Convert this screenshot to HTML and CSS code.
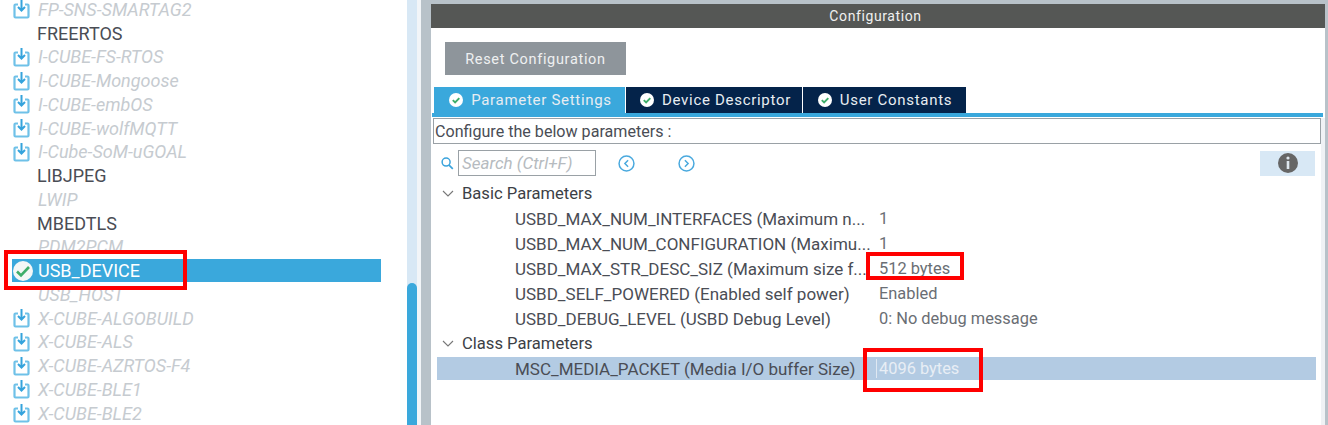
FILE: index.html
```html
<!DOCTYPE html>
<html lang="en">
<head>
    <meta charset="UTF-8">
    <title>Configuration</title>
    <link rel="stylesheet" href="styles.css">
</head>
<body>
<svg class="defs" width="0" height="0">
    <symbol id="pack" viewBox="0 0 17 20">
        <path d="M5 5.500H2.500a1 1 0 0 0-1 1v11a1 1 0 0 0 1 1h12a1 1 0 0 0 1-1v-11a1 1 0 0 0-1-1H12" fill="none" stroke="#6fc1e8" stroke-width="2.200"/>
        <path d="M8.500 1v10M5 8l3.500 3.500L12 8" fill="none" stroke="#35a3dc" stroke-width="2"/>
    </symbol>
    <symbol id="check" viewBox="0 0 14 14">
        <circle cx="7" cy="7" r="7" fill="#fff"/>
        <path d="M3.800 7.200l2.300 2.300 4.200-4.400" fill="none" stroke="#3fae6a" stroke-width="1.900"/>
    </symbol>
    <symbol id="check-big" viewBox="0 0 20 20">
        <circle cx="10" cy="10" r="10" fill="#f4f7f6"/>
        <path d="M4 10.500l4 4 8-8.500" fill="none" stroke="#3fae6a" stroke-width="2.600"/>
    </symbol>
</svg>
<main class="main">
    <aside class="packs">
        <ul class="pack-list">
            <li class="off"><svg class="pack-icon"><use href="#pack"/></svg>FP-SNS-SMARTAG2</li>
            <li class="on">FREERTOS</li>
            <li class="off"><svg class="pack-icon"><use href="#pack"/></svg>I-CUBE-FS-RTOS</li>
            <li class="off"><svg class="pack-icon"><use href="#pack"/></svg>I-CUBE-Mongoose</li>
            <li class="off"><svg class="pack-icon"><use href="#pack"/></svg>I-CUBE-embOS</li>
            <li class="off"><svg class="pack-icon"><use href="#pack"/></svg>I-CUBE-wolfMQTT</li>
            <li class="off"><svg class="pack-icon"><use href="#pack"/></svg>I-Cube-SoM-uGOAL</li>
            <li class="on">LIBJPEG</li>
            <li class="off">LWIP</li>
            <li class="on">MBEDTLS</li>
            <li class="off">PDM2PCM</li>
            <li class="selected"><svg class="check-icon"><use href="#check-big"/></svg>USB_DEVICE</li>
            <li class="off">USB_HOST</li>
            <li class="off"><svg class="pack-icon"><use href="#pack"/></svg>X-CUBE-ALGOBUILD</li>
            <li class="off"><svg class="pack-icon"><use href="#pack"/></svg>X-CUBE-ALS</li>
            <li class="off"><svg class="pack-icon"><use href="#pack"/></svg>X-CUBE-AZRTOS-F4</li>
            <li class="off"><svg class="pack-icon"><use href="#pack"/></svg>X-CUBE-BLE1</li>
            <li class="off"><svg class="pack-icon"><use href="#pack"/></svg>X-CUBE-BLE2</li>
        </ul>
    </aside>
    <div class="scrollbar"><div class="thumb"></div></div>
    <div class="gutter"></div>
    <section class="config">
        <h2 class="config-title">Configuration</h2>
        <button class="reset">Reset Configuration</button>
        <div class="tabs">
            <div class="tab active"><svg class="tab-check"><use href="#check"/></svg>Parameter Settings</div>
            <div class="tab"><svg class="tab-check"><use href="#check"/></svg>Device Descriptor</div>
            <div class="tab"><svg class="tab-check"><use href="#check"/></svg>User Constants</div>
        </div>
        <div class="hint">Configure the below parameters :</div>
        <div class="tools">
            <svg class="search-icon" viewBox="0 0 14 14"><circle cx="5.500" cy="5.500" r="4.300" fill="none" stroke="#3aa3dc" stroke-width="1.600"/><path d="M8.700 8.700l4 4" stroke="#3aa3dc" stroke-width="1.800"/></svg>
            <div class="search">Search (Ctrl+F)</div>
            <svg class="nav-icon prev" viewBox="0 0 16 16"><circle cx="8" cy="8" r="7" fill="none" stroke="#4aa9de" stroke-width="1.400"/><path d="M9.500 5L6.500 8l3 3" fill="none" stroke="#4aa9de" stroke-width="1.400"/></svg>
            <svg class="nav-icon next" viewBox="0 0 16 16"><circle cx="8" cy="8" r="7" fill="none" stroke="#4aa9de" stroke-width="1.400"/><path d="M6.500 5l3 3-3 3" fill="none" stroke="#4aa9de" stroke-width="1.400"/></svg>
            <div class="info">
                <svg class="info-icon" viewBox="0 0 20 20"><circle cx="10" cy="10" r="10" fill="#666"/><rect x="8.700" y="8" width="2.600" height="8" fill="#dfe7ee"/><circle cx="10" cy="5" r="1.600" fill="#dfe7ee"/></svg>
            </div>
        </div>
        <div class="params">
            <div class="group"><svg class="chevron" viewBox="0 0 12 8"><path d="M1 1l5 5 5-5" fill="none" stroke="#777" stroke-width="1.100"/></svg>Basic Parameters</div>
            <div class="row"><span class="name">USBD_MAX_NUM_INTERFACES (Maximum n...</span><span class="value">1</span></div>
            <div class="row"><span class="name">USBD_MAX_NUM_CONFIGURATION (Maximu...</span><span class="value">1</span></div>
            <div class="row"><span class="name">USBD_MAX_STR_DESC_SIZ (Maximum size f...</span><span class="value">512 bytes</span></div>
            <div class="row"><span class="name">USBD_SELF_POWERED (Enabled self power)</span><span class="value">Enabled</span></div>
            <div class="row"><span class="name">USBD_DEBUG_LEVEL (USBD Debug Level)</span><span class="value">0: No debug message</span></div>
            <div class="group"><svg class="chevron" viewBox="0 0 12 8"><path d="M1 1l5 5 5-5" fill="none" stroke="#777" stroke-width="1.100"/></svg>Class Parameters</div>
            <div class="row picked"><span class="name">MSC_MEDIA_PACKET (Media I/O buffer Size)</span><span class="value">4096 bytes</span></div>
        </div>
    </section>
    <div class="edge"></div>
</main>
<div class="mark mark-device"></div>
<div class="mark mark-str"></div>
<div class="mark mark-media"></div>
</body>
</html>
```

FILE: styles.css
```css
html, body {
    height: 100%;
    margin: 0;
}

body {
    position: relative;
    overflow: hidden;
    font-family: Roboto, 'Liberation Sans', sans-serif;
    background-color: #fff;
}

.defs {
    position: absolute;
}

.main {
    display: flex;
    height: 425px;
}

/* left list */
.packs {
    width: 407px;
    overflow: hidden;
}

.pack-list {
    list-style-type: none;
    margin: -2.600px 26px 0 0;
    padding: 0;
}

.pack-list li {
    display: flex;
    align-items: center;
    height: 23.750px;
    padding-left: 37px;
    position: relative;
    font-size: 18px;
    white-space: nowrap;
}

.pack-list .off {
    padding-left: 38px;
    color: #c6cbd0;
    font-style: italic;
}

.pack-list .on {
    color: #4a4d55;
}

.pack-list .selected {
    color: #fff;
    background-color: #3aa8dc;
    margin-left: 12px;
    padding-left: 26px;
}

.pack-icon {
    position: absolute;
    left: 13px;
    top: 2px;
    width: 17px;
    height: 20px;
}

.check-icon {
    position: absolute;
    left: 1px;
    top: 2px;
    width: 20px;
    height: 20px;
}

.scrollbar {
    width: 10px;
    background-color: #d8e8f5;
}

.thumb {
    height: 142px;
    margin-top: 283px;
    border-radius: 5px 5px 0 0;
    background-color: #3aa8dc;
}

.gutter {
    width: 14px;
    border-left: 4px solid #f2f5f8;
    box-sizing: border-box;
    background-color: #b8c2c9;
}

/* right panel */
.config {
    flex: 1;
    min-width: 0;
    padding-top: 4px;
    background:
        linear-gradient(#f0f2f5, #f0f2f5) right 118px / 4px 100% no-repeat,
        linear-gradient(#b8c2c9 4px, #fff 4px);
    color: #4a4d55;
}

.config-title {
    height: 24px;
    line-height: 24px;
    margin: 0 0 14px;
    padding-right: 5px;
    font-size: 14px;
    font-weight: 400;
    letter-spacing: .6px;
    text-align: center;
    color: #f0f0f0;
    background-color: #555755;
}

.reset {
    display: block;
    width: 181px;
    height: 33px;
    margin-left: 14px;
    padding: 1px 0 0;
    border: none;
    font-family: inherit;
    font-size: 14.500px;
    letter-spacing: .68px;
    color: #eef0f1;
    background-color: #8e959b;
}

.tabs {
    display: flex;
    gap: 1px;
    height: 26px;
    margin: 12px 2px 0 1px;
    padding-left: 2px;
    border-bottom: 4px solid #3aa8dc;
}

.tab {
    display: flex;
    align-items: center;
    justify-content: center;
    gap: 8px;
    font-size: 15px;
    letter-spacing: .7px;
    color: #e8edf2;
    background-color: #04234a;
}

.tab:nth-child(1) {
    width: 191px;
    padding-left: 2px;
    box-sizing: border-box;
    background-color: #3aa8dc;
}

.tab:nth-child(2) {
    width: 176px;
    padding-left: 3px;
    box-sizing: border-box;
}

.tab:nth-child(3) {
    width: 163px;
    padding-left: 1px;
    box-sizing: border-box;
}

.tab-check {
    width: 14px;
    height: 14px;
}

.hint {
    height: 26px;
    line-height: 25px;
    margin: 1px 4px 0 2px;
    padding-left: 1px;
    box-sizing: border-box;
    border: 1px solid #9aa1a6;
    font-size: 16.100px;
    white-space: nowrap;
}

.tools {
    display: flex;
    align-items: center;
    height: 26px;
    margin: 6px 10px 0 10px;
}

.search-icon {
    width: 13px;
    height: 13px;
    margin-right: 4px;
}

.search {
    width: 138px;
    height: 26px;
    line-height: 25px;
    padding-left: 3px;
    box-sizing: border-box;
    border: 1px solid #9aa1a6;
    font-size: 17px;
    font-style: italic;
    color: #b6bbc0;
    white-space: nowrap;
}

.nav-icon {
    width: 17px;
    height: 17px;
}

.prev {
    margin-left: 22px;
}

.next {
    margin-left: 43px;
}

.info {
    display: flex;
    align-items: center;
    justify-content: center;
    width: 55px;
    height: 25px;
    margin-left: auto;
    background-color: #d8e8f5;
}

.info-icon {
    width: 20px;
    height: 20px;
}

.params {
    margin: 5px 9px 0 6px;
}

.group {
    display: flex;
    align-items: center;
    height: 25px;
    padding-left: 25px;
    position: relative;
    font-size: 16.600px;
    color: #3c3f46;
}

.chevron {
    position: absolute;
    left: 5px;
    top: 9px;
    width: 12px;
    height: 8px;
}

.row {
    display: flex;
    align-items: center;
    height: 25px;
    padding-left: 78px;
    white-space: nowrap;
}

.name {
    width: 364px;
    font-size: 17px;
}

.value {
    font-size: 16.400px;
    color: #6a6e74;
}

.picked {
    height: 23px;
    margin-top: 1px;
    background-color: #b3cbe3;
}

.picked .value {
    color: #e8eef5;
    border-left: 1px solid #dfe8f2;
    margin-left: -3px;
    padding-left: 2px;
}

.edge {
    width: 3px;
    background-color: #b8c2c9;
}

/* red annotation boxes */
.mark {
    position: absolute;
    box-sizing: border-box;
    border: 4px solid #f00;
}

.mark-device {
    left: 4px;
    top: 250px;
    width: 183px;
    height: 40px;
}

.mark-str {
    left: 866px;
    top: 252px;
    width: 98px;
    height: 28px;
}

.mark-media {
    left: 863px;
    top: 348px;
    width: 120px;
    height: 44px;
}
```
